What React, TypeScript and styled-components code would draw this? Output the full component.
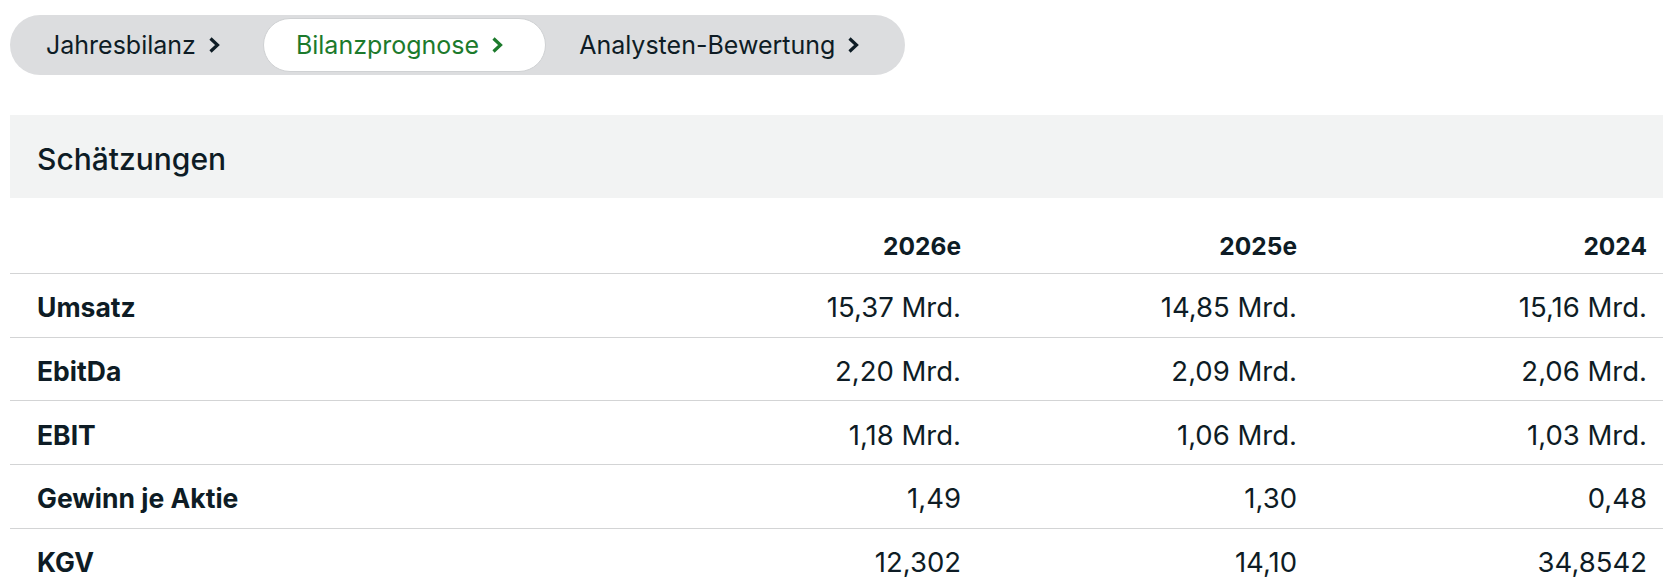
import styled, { createGlobalStyle } from "styled-components";

const GlobalStyle = createGlobalStyle`
  body {
    margin: 0;
    background: #fff;
    font-family: Inter, "Liberation Sans", sans-serif;
    color: #0e1c25;
  }
`;

const Page = styled.div`
  padding: 15px 0 0 10px;
  display: flex;
  flex-direction: column;
  gap: 40px;
`;

const TabBar = styled.nav`
  display: flex;
  align-self: flex-start;
  padding: 3px;
  background: #dcdddf;
  border-radius: 30px;
`;

const Tab = styled.button<{ $active?: boolean }>`
  display: flex;
  align-items: center;
  gap: 12px;
  height: 54px;
  padding: 0 42px 0 32px;
  border: 1px solid ${(p) => (p.$active ? "#cfd1d3" : "transparent")};
  border-radius: 27px;
  background: ${(p) => (p.$active ? "#fff" : "transparent")};
  color: ${(p) => (p.$active ? "#1c7a2c" : "#0e1c25")};
  font-family: inherit;
  font-size: 25px;
  cursor: pointer;
`;

const Chevron = () => (
  <svg width="12" height="18" viewBox="0 0 12 18" fill="none">
    <path d="M2.5 2.5 L9.5 9 L2.5 15.5" stroke="currentColor" strokeWidth="3.2" />
  </svg>
);

const Section = styled.section`
  display: flex;
  flex-direction: column;
`;

const SectionHead = styled.h2`
  margin: 0;
  height: 83px;
  box-sizing: border-box;
  padding: 4px 0 0 27px;
  display: flex;
  align-items: center;
  background: #f2f3f3;
  font-size: 30px;
  font-weight: 500;
`;

const Row = styled.div<{ $head?: boolean }>`
  display: grid;
  grid-template-columns: 1fr 336px 336px 350px;
  align-items: ${(p) => (p.$head ? "end" : "center")};
  height: ${(p) => (p.$head ? "75px" : "63.65px")};
  padding: ${(p) => (p.$head ? "0 0 12px" : "4px 0 0")};
  box-sizing: border-box;
  border-top: ${(p) => (p.$head ? "none" : "1px solid #d3d4d5")};
`;

const Label = styled.div`
  padding-left: 27px;
  font-size: 26.5px;
  font-weight: 700;
`;

const Cell = styled.div<{ $bold?: boolean }>`
  padding-right: 16px;
  text-align: right;
  font-size: ${(p) => (p.$bold ? "24.5px" : "27.5px")};
  font-weight: ${(p) => (p.$bold ? 700 : 400)};
`;

const tabs = ["Jahresbilanz", "Bilanzprognose", "Analysten-Bewertung"];
const years = ["2026e", "2025e", "2024"];
const rows: [string, string[]][] = [
  ["Umsatz", ["15,37 Mrd.", "14,85 Mrd.", "15,16 Mrd."]],
  ["EbitDa", ["2,20 Mrd.", "2,09 Mrd.", "2,06 Mrd."]],
  ["EBIT", ["1,18 Mrd.", "1,06 Mrd.", "1,03 Mrd."]],
  ["Gewinn je Aktie", ["1,49", "1,30", "0,48"]],
  ["KGV", ["12,302", "14,10", "34,8542"]],
];

export default function App() {
  return (
    <Page>
      <GlobalStyle />
      <TabBar>
        {tabs.map((t) => (
          <Tab key={t} $active={t === "Bilanzprognose"}>
            {t}
            <Chevron />
          </Tab>
        ))}
      </TabBar>
      <Section>
        <SectionHead>Schätzungen</SectionHead>
        <Row $head>
          <Label />
          {years.map((y) => (
            <Cell key={y} $bold>
              {y}
            </Cell>
          ))}
        </Row>
        {rows.map(([label, values]) => (
          <Row key={label}>
            <Label>{label}</Label>
            {values.map((v, i) => (
              <Cell key={i}>{v}</Cell>
            ))}
          </Row>
        ))}
      </Section>
    </Page>
  );
}
